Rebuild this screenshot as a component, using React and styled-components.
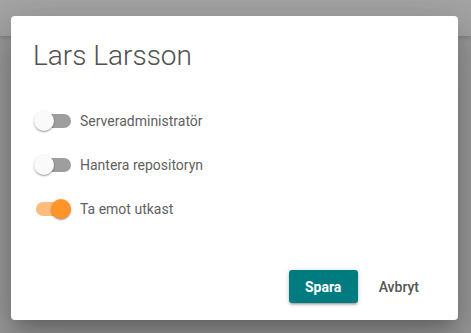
import React, { useState } from "react";
import styled, { createGlobalStyle } from "styled-components";

const Global = createGlobalStyle`
  html, body { margin: 0; padding: 0; height: 100%; }
  body { font-family: Roboto, "Noto Sans", sans-serif; background: #999999; }
  #root { height: 100%; }
`;

const Page = styled.div`
  position: relative;
  height: 333px;
  background: #9a9a9a;
  overflow: hidden;
`;

const AppBar = styled.div`
  height: 36px;
  background: #a5a5a5;
  box-shadow: 0 2px 4px rgba(0, 0, 0, 0.15);
`;

const Overlay = styled.div`
  position: absolute;
  inset: 0;
  display: flex;
  justify-content: flex-start;
  align-items: flex-start;
  padding: 16px 0 0 11px;
`;

const Dialog = styled.div`
  width: 447px;
  height: 304px;
  box-sizing: border-box;
  background: #ffffff;
  border-radius: 4px;
  box-shadow: 0 11px 15px -7px rgba(0, 0, 0, 0.2), 0 24px 38px 3px rgba(0, 0, 0, 0.14),
    0 9px 46px 8px rgba(0, 0, 0, 0.12);
  display: flex;
  flex-direction: column;
  padding: 24px 23px 17px 22px;
`;

const Title = styled.h2`
  margin: 0;
  font-family: Roboto, sans-serif;
  font-weight: 300;
  font-size: 28px;
  line-height: 32px;
  color: #505050;
`;

const List = styled.div`
  margin-top: 27px;
  display: flex;
  flex-direction: column;
`;

const Row = styled.label`
  height: 44px;
  display: flex;
  align-items: center;
  gap: 8px;
  cursor: pointer;
`;

const SwitchRoot = styled.span`
  position: relative;
  width: 37px;
  height: 20px;
  margin-left: 2px;
  display: inline-block;
  flex: none;
`;

const Track = styled.span`
  position: absolute;
  left: 1px;
  right: 1px;
  top: 3px;
  height: 14px;
  border-radius: 7px;
  background: ${(p) => (p.$on ? "#ffbc7a" : "#9e9e9e")};
`;

const Thumb = styled.span`
  position: absolute;
  top: 0;
  left: ${(p) => (p.$on ? "16px" : "-1px")};
  width: 20px;
  height: 20px;
  border-radius: 50%;
  background: ${(p) => (p.$on ? "#ff9428" : "#fafafa")};
  box-shadow: 0 1px 3px rgba(0, 0, 0, 0.2), 0 1px 1px rgba(0, 0, 0, 0.14),
    0 2px 1px -1px rgba(0, 0, 0, 0.12);
`;

const LabelText = styled.span`
  font-size: 14px;
  color: #5f5f5f;
  font-family: Roboto, sans-serif;
`;

const Actions = styled.div`
  margin-top: auto;
  display: flex;
  justify-content: flex-end;
  align-items: center;
  gap: 5px;
`;

const Button = styled.button`
  height: 33px;
  border: none;
  border-radius: 3px;
  padding: 0 16px;
  min-width: ${(p) => (p.$primary ? "69px" : "0")};
  font-family: Roboto, sans-serif;
  font-size: 14px;
  font-weight: ${(p) => (p.$primary ? 700 : 500)};
  color: ${(p) => (p.$primary ? "#ffffff" : "#555555")};
  background: ${(p) => (p.$primary ? "#007b7f" : "transparent")};
  box-shadow: ${(p) =>
    p.$primary
      ? "0 1px 5px rgba(0,0,0,0.2), 0 2px 2px rgba(0,0,0,0.14), 0 3px 1px -2px rgba(0,0,0,0.12)"
      : "none"};
  cursor: pointer;
`;

function Toggle({ on, onClick, label }) {
  return (
    <Row onClick={onClick}>
      <SwitchRoot>
        <Track $on={on} />
        <Thumb $on={on} />
      </SwitchRoot>
      <LabelText>{label}</LabelText>
    </Row>
  );
}

export default function App() {
  const [vals, setVals] = useState([false, false, true]);
  const labels = ["Serveradministratör", "Hantera repositoryn", "Ta emot utkast"];
  return (
    <Page>
      <Global />
      <AppBar />
      <Overlay>
        <Dialog>
          <Title>Lars Larsson</Title>
          <List>
            {labels.map((l, i) => (
              <Toggle
                key={l}
                label={l}
                on={vals[i]}
                onClick={() => setVals(vals.map((v, j) => (j === i ? !v : v)))}
              />
            ))}
          </List>
          <Actions>
            <Button $primary>Spara</Button>
            <Button>Avbryt</Button>
          </Actions>
        </Dialog>
      </Overlay>
    </Page>
  );
}
